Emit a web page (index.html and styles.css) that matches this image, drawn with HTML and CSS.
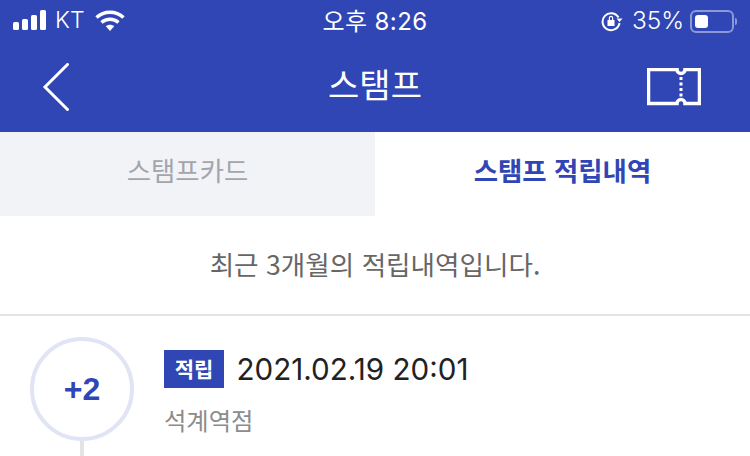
FILE: index.html
```html
<!DOCTYPE html>
<html lang="ko">
<head>
<meta charset="utf-8">
<title>스탬프</title>
<link rel="stylesheet" href="styles.css">
</head>
<body>
<header class="top">
  <div class="status">
    <div class="status-left">
      <svg class="signal" width="33" height="22" viewBox="0 0 33 22"><rect x="0" y="12" width="6" height="8" rx="1.5"/><rect x="9" y="9" width="6" height="11" rx="1.5"/><rect x="18" y="5" width="6" height="15" rx="1.5"/><rect x="27" y="0" width="6" height="20" rx="1.5"/></svg>
      <span class="carrier">KT</span>
      <svg class="wifi" width="30" height="22" viewBox="0 0 30 22"><path d="M1.500 7.500C9 .5 21 .5 28.500 7.500" /><path d="M6.500 12.500c4.800-4.200 12.200-4.200 17 0"/><path class="wifi-dot" d="M10.800 16.200c2.500-2 5.900-2 8.400 0L15 21z"/></svg>
    </div>
    <div class="clock">오후 8:26</div>
    <div class="status-right">
      <svg class="lock" width="22" height="22" viewBox="0 0 22 22"><path class="lock-ring" d="M17.500 7.500A8.500 8.500 0 1 0 18.500 13"/><path class="lock-fill" d="M15.500 8.500h6l-3 3.500zM6.500 10h7v6h-7zM7.800 10V8a2.200 2.200 0 0 1 4.400 0v2H11V8a1 1 0 0 0-2 0v2z"/></svg>
      <span class="percent">35%</span>
      <div class="battery"><div class="battery-level"></div></div>
      <div class="battery-cap"></div>
    </div>
  </div>
  <div class="nav">
    <svg class="back" width="28" height="48" viewBox="0 0 28 48"><path d="M25.500 1.500 3 24l22.500 22.500"/></svg>
    <h1 class="title">스탬프</h1>
    <svg class="ticket" width="54" height="38" viewBox="0 0 54 38"><path class="ticket-line" d="M1.500 1.500H30a4 4 0 0 0 8 0h14.500v34H38a4 4 0 0 0-8 0H1.500z"/><path class="ticket-dash" d="M34 9v22"/></svg>
  </div>
</header>
<nav class="tabs">
  <div class="tab">스탬프카드</div>
  <div class="tab tab-active">스탬프 적립내역</div>
</nav>
<p class="notice">최근 3개월의 적립내역입니다.</p>
<section class="entry">
  <div class="timeline">
    <div class="points">+2</div>
    <div class="stem"></div>
  </div>
  <div class="detail">
    <div class="detail-top">
      <span class="badge">적립</span>
      <span class="date">2021.02.19 20:01</span>
    </div>
    <div class="place">석계역점</div>
  </div>
</section>
</body>
</html>
```
FILE: styles.css
```css
* { box-sizing: border-box; }
html, body { margin: 0; padding: 0; }
body {
  width: 750px;
  height: 456px;
  overflow: hidden;
  background: #fff;
  font-family: "Liberation Sans", "Noto Sans CJK KR", sans-serif;
}
.top { background: #3046b5; height: 132px; color: #fff; }
.status {
  height: 42px;
  padding: 0 13px;
  display: grid;
  grid-template-columns: 1fr auto 1fr;
  align-items: center;
}
.status-left { display: flex; align-items: center; }
.carrier { font-size: 23px; margin-left: 9px; font-family: "Inter", sans-serif; font-weight: 300; padding-bottom: 2px; }
.signal { fill: #fff; }
.wifi { margin-left: 10px; }
.wifi path { fill: none; stroke: #fff; stroke-width: 3.500; }
.wifi .wifi-dot { fill: #fff; stroke: none; }
.clock { font-size: 24px; font-family: "Inter", "Noto Sans CJK KR", sans-serif; letter-spacing: .4px; padding-bottom: 4px; }
.status-right { display: flex; align-items: center; justify-content: flex-end; }
.lock-ring { fill: none; stroke: #fff; stroke-width: 2; }
.lock-fill { fill: #fff; }
.percent { font-size: 24.400px; font-family: "Inter", sans-serif; font-weight: 300; margin-left: 9px; padding-bottom: 2px; }
.battery {
  width: 44px;
  height: 23px;
  margin-left: 6px;
  padding: 3px;
  border: 2px solid rgba(255,255,255,.45);
  border-radius: 6px;
}
.battery-level { width: 13px; height: 13px; background: #fff; border-radius: 3px; }
.battery-cap { width: 2px; height: 7px; margin-left: 1px; background: rgba(255,255,255,.45); border-radius: 0 2px 2px 0; }
.nav {
  height: 90px;
  padding: 0 49px;
  display: grid;
  grid-template-columns: 1fr auto 1fr;
  align-items: center;
}
.back { margin-left: -7px; }
.back path { fill: none; stroke: #fff; stroke-width: 3; stroke-linecap: round; }
.title { margin: 0; font-size: 34px; line-height: 44px; font-weight: 400; font-family: "Noto Sans CJK KR", sans-serif; padding-bottom: 6px; }
.ticket { justify-self: end; }
.ticket-line { fill: none; stroke: #fff; stroke-width: 3.500; }
.ticket-dash { fill: none; stroke: #fff; stroke-width: 3; stroke-dasharray: 3 2.500; }
.tabs { display: flex; height: 84px; }
.tab {
  flex: 1;
  background: #f2f3f7;
  color: #a3a5ab;
  font-size: 26.400px;
  line-height: 36px;
  padding-bottom: 8px;
  font-family: "Noto Sans CJK KR", sans-serif;
  display: flex;
  align-items: center;
  justify-content: center;
}
.tab-active { background: #fff; color: #3046b5; font-weight: 700; }
.notice {
  margin: 0;
  height: 100px;
  padding-bottom: 4px;
  border-bottom: 2px solid #e4e4e4;
  display: flex;
  align-items: center;
  justify-content: center;
  color: #666;
  font-size: 26.600px;
  font-family: "Noto Sans CJK KR", sans-serif;
}
.entry { display: flex; padding: 21px 0 0 30px; }
.timeline { display: flex; flex-direction: column; align-items: center; width: 104px; }
.points {
  width: 104px;
  height: 104px;
  border: 4px solid #e0e4f4;
  border-radius: 50%;
  color: #3046b5;
  font-size: 32px;
  font-weight: 700;
  display: flex;
  align-items: center;
  justify-content: center;
}
.stem { width: 4px; height: 20px; background: #e4e4e4; }
.detail { margin-left: 30px; padding-top: 13px; }
.detail-top { display: flex; align-items: center; }
.badge {
  width: 60px;
  height: 38px;
  padding-bottom: 3px;
  background: #3046b5;
  color: #fff;
  font-size: 21px;
  font-weight: 700;
  font-family: "Noto Sans CJK KR", sans-serif;
  display: flex;
  align-items: center;
  justify-content: center;
}
.date { margin-left: 12.500px; font-size: 29.600px; color: #222; font-family: "Inter", sans-serif; }
.place { margin-top: 14px; font-size: 24.300px; color: #8c8c8c; font-family: "Noto Sans CJK KR", sans-serif; line-height: 36px; }
```
